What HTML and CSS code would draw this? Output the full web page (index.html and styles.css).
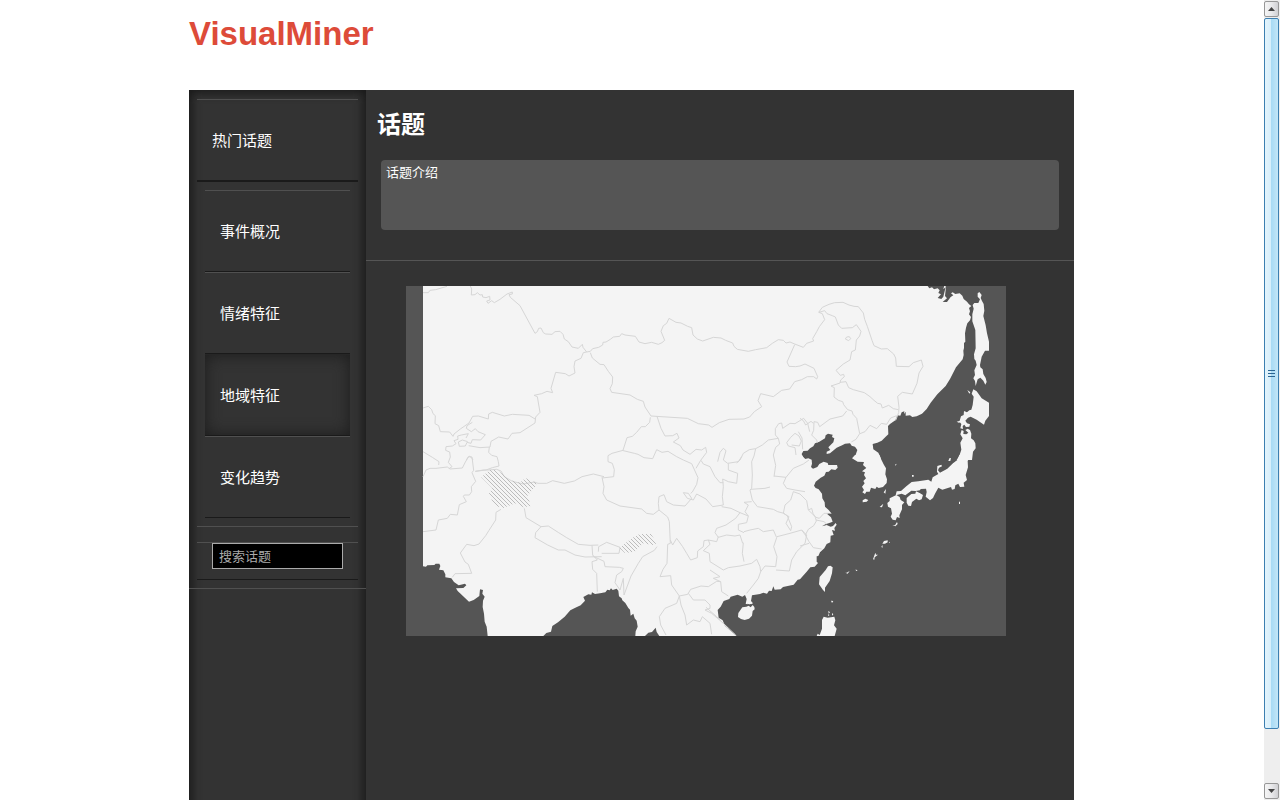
FILE: index.html
```html
<!DOCTYPE html>
<html lang="zh-CN">
<head>
<meta charset="utf-8">
<title>VisualMiner</title>
<link rel="stylesheet" href="styles.css">
</head>
<body>
<div class="page">
  <div class="wrapper">
    <header class="header"><h1>VisualMiner</h1></header>
    <div class="panel">
      <nav class="sidebar">
        <div class="group">
          <a class="item item-root" href="#">热门话题</a>
          <ul class="submenu">
            <li><a class="item" href="#">事件概况</a></li>
            <li><a class="item" href="#">情绪特征</a></li>
            <li><a class="item active" href="#" aria-current="page">地域特征</a></li>
            <li><a class="item" href="#">变化趋势</a></li>
          </ul>
          <form class="search"><input type="text" placeholder="搜索话题" aria-label="搜索话题"></form>
        </div>
      </nav>
      <main class="main">
        <section class="topic">
          <h2>话题</h2>
          <p class="intro">话题介绍</p>
        </section>
        <section class="map">
          <svg viewBox="18 18 1800 1050" role="img" aria-label="中国地图">
            <defs>
              <pattern id="hatch" width="12" height="12" patternUnits="userSpaceOnUse"><path d="M-1-1L13 13M-1 11L1 13M11-1L13 1" stroke="#bcbcbc" stroke-width="3"/></pattern>
            </defs>
            <!-- land -->
            <g fill="#f4f4f4">
              <path d="M69 18H600V540H69z"/>
              <path d="M600 18H1200V540H600z"/>
              <g transform="translate(1200 0)">
                <path d="M0 18H383L388 25 396 22 402 28 413 25 419 31 415 39 423 43 413 54 424 57 430 50 437 21 430 28 433 16 438 20 435 48 441 55 428 66 441 66 452 51 460 46 453 40 458 37 466 42 479 40 487 47 491 57 501 65 507 73 514 78 507 84 510 94 507 103 513 111 510 121 502 130 498 143 495 160 496 185 492 189 492 204 490 212 491 225 488 238 468 262 450 297 437 318 412 343 392 368 380 387 366 401 350 409 337 411 330 406 317 407 317 395 312 402 313 394 305 397 301 407 292 406 286 421 270 432 264 438 265 463 257 470 245 482 232 488 218 492 220 508 235 518 241 531 243 540H165L167 524 172 510 165 500 155 497 150 490 135 491 128 495 110 503 90 520 80 522 80 515 91 510 85 502 100 487 103 475 96 471 98 464 84 461 77 466 75 475 58 485 45 490 40 499 30 505 23 512 10 513 5 522 10 533 20 540H0z"/>
                <path d="M538 36L545 45 542 54 546 63 551 72 553 92 550 108 557 136 561 160 567 185V212H555L545 230 540 255 541 262 548 268 550 282 557 294 560 306 556 314 550 302 541 293 533 298 527 318 525 303 520 295 525 285 523 271 530 255 527 242 523 237 522 223 527 205 526 150 517 124 517 103 521 86 518 75 523 69 535 69 540 58 533 50 533 40z"/>
                <path d="M520 328L530 334 545 355 567 368V408L556 422 552 434 530 419 512 410 504 413 496 422 501 430 510 433 508 440 498 441 493 434 488 438 489 447 481 445 484 432 478 425 483 409 491 405 492 393 501 397 508 391 514 389 518 375 521 350 515 341zM502 330L511 337 508 341zM470 425L480 422 478 429z"/>
                <path d="M485 450L491 453 490 462 499 463 505 458 496 450 503 446 510 450 514 461 513 475 521 481 526 490 527 505 519 515 516 540H470L478 527 484 509 481 488 488 475 481 463z"/>
              </g>
              <path transform="translate(0 525)" d="M69 0V334L78 335 82 331 103 330 107 326 118 326 121 333 117 344 130 346 136 358 136 367 154 370 162 381 176 391 195 386 199 391 190 399 168 400 173 408 207 440 221 435 238 423 240 403 249 405 247 416 254 425 249 437 248 456 252 476 254 500 260 515 263 543H430L439 534 453 530 457 513 474 502 494 485 511 466 526 458 542 451 555 437 550 426 565 418 574 419 576 412 585 417 600 415V0z"/>
              <path transform="translate(600 525)" d="M0 0V415L16 412 22 404 29 406 33 400 38 405 50 401 55 407 57 424 65 430 67 436 76 444 85 459 90 464 92 482 100 476 104 490 110 497 113 515 107 529 106 543H135L145 533 156 531 167 518 170 531 178 543H410L389 525 375 512 368 496 356 488 353 465 362 455 371 438 388 432 392 425 413 419 427 425 435 420 440 432 437 446 449 450 459 445 453 438 456 421 480 417 490 413 501 416 507 407 515 408 520 394 524 404 542 403 549 396 581 389 593 374 600 373V0z"/>
              <path transform="translate(600 525)" d="M415 474L427 457 439 455 446 452 452 457 458 450 463 456 464 463 458 468 456 482 447 491 434 495 423 492 414 486z"/>
              <g transform="translate(1200 525)">
                <path d="M0 0H5L15 12 25 10 35 14 36 26 33 36 39 41 52 36 58 27 71 20 83 24 85 30 111 30 113 38 106 45 94 43 86 50 78 51 73 62 62 68 47 80 42 92 47 99 56 103 66 116 67 130 74 142 75 155 86 165 95 176 79 175 93 187 98 200 88 204 76 208 66 214 80 210 92 215 99 213 107 204 110 209 103 219 105 227 96 225 101 240 92 242 91 262 80 267 73 280 60 292 55 303 50 304 50 320 54 324 44 335 31 337 20 350 0 373z"/>
                <path d="M165 0H238L243 12 252 30 258 40 256 58 261 73 260 84 249 96 236 99 230 95 226 102 213 98 209 110 199 110 195 117 187 112 192 105 186 95 194 85 190 78 198 70 192 60 195 52 186 49 199 39 189 30 192 21 173 20 156 10z"/>
                <path d="M478 0L473 14 459 25 442 41 420 53 414 46 417 38 426 34 424 29 412 33 411 50 415 57 398 67 394 80 385 74 355 79 335 81 319 94 303 108 290 109 287 121 305 116 316 121 334 107 347 108 360 106 362 102 378 101 380 111 377 125 390 136 399 129 405 116 410 107 415 98 427 104 453 96 456 104 464 102 466 91 475 86 480 96 493 95 491 83 501 75 497 60 504 37 503 18 510 5 516 9 515 0z"/>
                <path d="M320 129L334 117 346 116 348 109 359 114 369 120 365 133 357 136 349 131 336 141 333 153 325 152 320 143zM289 120L299 126 302 135 313 142 306 150 306 163 298 181 299 189 291 186 287 196 278 194 272 185 276 176 273 160 264 155 262 144 269 138 269 130zM188 136L196 131 205 135 200 140 188 142zM251 112L258 102 256 116zM239 156L250 146 246 157zM277 211L285 211 291 201 293 207 286 214zM247 266L252 258 263 256 263 262 255 266zM244 276L247 270 248 278zM219 313L226 293 228 299 234 299 224 307 223 314zM136 353L143 356 149 348 140 353zM167 343L173 347 168 348zM445 18L448 10 453 9 451 18zM336 60H341V65H336zM285 29L290 26 287 32zM477 140H480V147H477zM267 260L270 262 267 264z"/>
                <path d="M77 345L84 334 91 332 98 337 96 355 89 378 75 398 75 411 69 405 57 388 59 366zM93 437L100 438 96 444zM85 467L90 472 86 476zM84 478L89 480 84 483zM96 474L100 478 96 482zM66 495L71 485 83 488 103 485 106 496 102 511 110 521 104 543H50L53 536 59 540 66 521z"/>
              </g>
            </g>
            <!-- inlets -->
            <path transform="translate(600 525)" d="M442 448L450 450 452 447" fill="none" stroke="#555" stroke-width="3"/>
            <!-- borders -->
            <g class="borders">
              <path d="M69 38H85L90 31 107 29 141 19M211 18L215 27 214 45 225 44 232 38 240 45 247 44 248 51 258 53 269 49 270 60 260 63 264 70 275 62 283 68 300 58 321 42 337 36 337 42 327 44 331 52 360 77 405 160 412 155 416 145 423 144 430 158 437 162 456 163 465 155 480 154 489 163 493 177 505 185 516 201 535 205 547 193 549 202 560 216 571 214 578 206 596 202 608 195 609 187 618 186 631 178 640 171 659 169 665 161 675 165 706 169 717 186 735 191 755 187 775 193 786 188 794 181 783 154 790 137 800 130 807 115 828 127 843 129 863 139 875 143 879 165 892 177 908 183 940 172 963 174 977 181 998 189 1002 199 1012 208 1045 214 1067 209 1100 203 1117 190 1135 179 1150 181 1158 189 1170 186 1184 192 1210 202 1220 190 1241 183 1238 176 1250 155 1258 140 1274 119 1267 101 1256 97 1267 82 1287 73 1304 68 1329 67 1347 75 1362 79 1375 80 1390 99 1394 118 1402 139 1416 181 1422 197 1444 207 1462 206 1481 222 1487 234 1489 259 1527 260 1540 248 1564 240 1569 259 1557 279 1551 310 1537 342 1507 337 1493 349 1497 382 1496 398 1487 421"/>
              <path d="M560 216L550 218 543 235 525 243 522 260 525 279 507 288 496 281 467 277 453 325 458 338 441 334 425 341 402 346 412 350 420 397 407 411 405 429 360 458 336 460 324 477 296 471 273 484 270 501 240 503 206 497M407 418L387 406 337 403 313 408 277 397 266 402 265 417 235 408 218 409 207 429 181 447 162 462 159 469 149 456 121 455 116 437 105 431 106 407 99 401 95 389 85 379 69 384M217 427L201 437 199 445 214 455 226 446 234 455 256 464 242 480 217 479 213 490 201 487 196 498 178 499 175 486 187 480 203 485M198 474L205 461 184 465 173 468 174 478 162 482 168 491 157 498 138 500 137 511 149 516 151 531 145 547 156 560 147 566M69 515L97 532 117 545 116 555M199 540Q208 518 219 540M268 501L266 517 275 526 291 530 295 545 297 558 277 563 258 570 226 574"/>
              <path d="M571 218L577 234 600 253 612 254 625 274 638 291 637 311 630 326 635 337 690 345 712 358 730 364 735 381 753 408 862 415 895 431 926 435 936 442 958 428 987 418 1032 417 1049 411 1063 395 1085 380 1074 362 1082 341 1120 350 1145 331 1169 327 1184 305 1205 299 1222 290 1241 290 1250 297 1253 290 1242 265 1215 252 1200 258 1187 260 1167 259 1161 246 1184 194M771 409L783 445 795 468 818 467 831 460 837 474 820 486 841 497 849 510 870 523 888 508 905 510 917 502 920 517 902 541 888 565M751 412L749 427 736 440 724 440 710 457 697 469 681 473 669 511 636 520 624 527 624 545 637 550 643 569 641 590 606 594M666 511L703 520 714 523 732 533 758 536 770 509 786 517 804 514 830 530 850 540 875 551 894 593 890 613 877 636 872 640"/>
              <path d="M1257 97L1274 92 1281 101 1297 107 1306 111 1315 135 1325 145 1357 143 1369 134 1383 154 1379 168 1369 180 1366 210 1355 215 1350 240 1330 252 1308 271 1321 286 1331 283 1333 290 1322 300 1320 309 1293 318 1303 323 1302 351 1315 361 1328 365 1331 374 1343 389 1356 393 1359 403 1370 415 1379 461 1368 478 1354 486M1320 307L1338 305 1346 323 1360 329 1393 338 1410 350 1422 361 1433 370 1443 372 1447 384 1466 376 1480 386 1495 389M1340 393L1328 408 1290 417 1259 440 1253 427 1242 425 1241 451 1235 465 1250 480 1252 488M1380 461L1395 455 1410 436 1430 446 1444 430 1460 433 1472 414 1490 407M1340 171L1348 170 1352 176 1346 182 1336 177zM1200 415L1210 422 1217 435 1233 424 1240 430M1195 455L1206 474 1208 508"/>
              <path d="M1229 455L1223 430 1211 415 1185 431 1170 430 1148 445 1145 429 1136 431 1126 446 1126 465 1135 475 1105 480 1087 495 1067 506 1062 528 1055 545 1057 585 1055 625M1067 506L1048 509 1030 520 1020 540 1010 549M953 545L960 517 970 505 978 512 970 540 983 550 1015 545 1025 530M903 541L910 552 930 560 945 590 960 608 970 608M1135 475L1139 492 1127 502 1120 525 1127 556 1122 590M1188 525L1185 503 1165 498 1160 488 1172 472 1185 460 1197 468 1204 483 1198 498 1175 495M1055 625L1050 630 1057 660 1072 680 1120 688 1133 695 1152 700 1162 708 1175 740 1172 752M1122 588L1158 592 1150 610 1160 625 1185 630 1215 635M1110 621L1095 625 1052 628M1158 592L1180 565 1210 552 1227 540"/>
              <path d="M69 755L108 750 115 720 142 715 151 703 172 705 178 674 199 665 190 649 193 645 208 645 215 635 214 620 227 604 216 578 221 571 216 531 206 530 196 546 187 564 150 567 142 561 108 565 90 565 78 570 69 590M226 574L250 570 266 570 290 568 303 573 313 590 337 604 370 612 403 606 414 610 440 610 458 602 493 610 523 603 546 590 580 582 612 590M303 688L288 697 287 720 267 751 257 767 237 792 222 797 200 793 181 819 195 846 205 853 215 880 165 881 157 892M373 685L378 713 423 740 407 758 405 773 443 795 475 810 495 810 525 825 555 831 605 830M423 740L445 738 476 758 500 773 535 793 570 796 595 795M576 796L578 825 592 840 576 845 578 868 590 880 592 935M578 828L612 844 615 860 658 862 670 865 665 875 650 885 645 908 660 930 670 895 672 945 693 888 715 850 728 830 763 811 771 800M595 815L596 800 620 787 660 802 657 820 605 820"/>
              <path d="M606 592L612 620 609 640 620 660 660 678 725 687 740 700 760 703 777 690 803 711 808 725 811 790 803 793 801 850 789 868 780 890 812 887 815 915 838 948 863 943 872 928 903 918 925 920 950 904 962 905M777 690L775 670 777 650 792 644 800 665 820 675 855 678 875 655 865 640 850 638 862 655 880 660 890 642 918 657 938 680 970 675 967 650 970 620 968 597 985 605 1010 610 1013 580 985 570 985 550M965 680L993 685 1020 698 1007 715 978 735 950 745 945 758 955 772 980 765 1005 768 1020 765 1028 790M1020 698L1045 708 1040 728 1015 733 1015 750 1032 758M1055 665L1032 667 1045 675 1035 695 1045 708M811 780L818 795 830 775 848 800 860 820 872 840 892 833 893 813 910 800 912 782 925 780 950 785 955 770M925 780L930 793 910 812 928 820 930 845 970 870 985 863 1020 858 1055 850 1070 838 1080 860 1082 875 1075 895 1060 915 1040 940M1030 788L1027 820 1032 845M930 870L960 890 940 895 962 905 965 935 985 948M1032 755L1050 750 1075 745 1090 755 1120 750 1130 773 1121 800 1131 830 1127 860 1095 858 1082 875M1131 770L1170 760 1205 750 1220 765 1215 790 1190 815 1175 840 1168 873 1128 870"/>
              <path d="M838 948L830 970 795 985 778 1010 782 1035 798 1065M838 948L843 975 855 1005 860 1035 880 1020 900 1025 907 1010 930 1030 935 1063M865 940L880 960 915 960 930 975 930 985 915 990M915 990L935 1000 970 1030 1007 1065M918 982L950 1010 985 1045M1172 752L1158 730 1167 710 1150 700 1155 675 1172 660 1180 635M1180 635L1200 642 1220 662 1225 690 1235 685 1239 700 1246 712 1249 723 1241 737 1225 748 1216 765M1225 690L1248 712 1258 715 1272 700 1285 700M1248 720L1272 725 1280 732M1216 765L1227 785 1240 803 1265 807M1205 750L1216 765M1227 790L1200 798"/>
            </g>
            <g fill="url(#hatch)">
              <path d="M244 592L270 569 292 570 330 600 360 608 376 594 409 609 408 617 382 647 393 678 370 682 345 670 310 684 283 677 267 640 277 625z"/>
              <path d="M658 804L695 775 719 762 753 762 770 790 758 795 730 790 704 815 675 819z"/>
            </g>
          </svg>
        </section>
      </main>
    </div>
  </div>
</div>
<div class="scrollbar" aria-hidden="true">
  <span class="arrow"><svg viewBox="0 0 7 4"><path d="M0 4L3.500 0 7 4z"/></svg></span>
  <span class="thumb"><i></i><i></i><i></i></span>
  <span class="track"></span>
  <span class="arrow"><svg viewBox="0 0 7 4"><path d="M0 0L3.500 4 7 0z"/></svg></span>
</div>
</body>
</html>
```
FILE: styles.css
```css
* { box-sizing: border-box; }
body {
  margin: 0;
  height: 100vh;
  display: flex;
  background: #fff;
  color: #fff;
  font: 15px/16px "Liberation Sans", "Noto Sans CJK SC", sans-serif;
}
.page { flex: 1; min-width: 0; overflow: hidden; }
.wrapper {
  max-width: 885px;
  min-height: 100%;
  margin: 0 auto;
  display: flex;
  flex-direction: column;
}
.header { height: 90px; padding-top: 16px; }
h1 { margin: 0; font-size: 33px; line-height: 36px; color: #dd4b39; }
.panel { flex: 1; display: flex; overflow: hidden; background: #333; }
.sidebar {
  width: 177px;
  flex: none;
  margin-bottom: -20px;
  box-shadow: inset 0 0 10px 3px #1a1a1a;
}
.group {
  padding: 9px 8px 8px;
  border-bottom: 1px solid #505050;
}
.item {
  display: block;
  padding: 33px 15px 31px;
  border-top: 1px solid #505050;
  border-bottom: 1px solid #1a1a1a;
  color: #fff;
  text-decoration: none;
}
.item-root { border-bottom-width: 2px; }
.active {
  border-top-color: #262626;
  box-shadow: inset 0 0 15px #1c1c1c;
}
.submenu { list-style: none; margin: 0; padding: 8px; }
.search {
  margin: 0;
  border-top: 1px solid #505050;
  border-bottom: 1px solid #1a1a1a;
  padding: 16px 15px 10px;
  background: linear-gradient(#505050, #505050) 0 15px / 100% 1px no-repeat;
}
.search input {
  display: block;
  width: 100%;
  height: 26px;
  padding: 0 6px;
  border: 1px solid #aaa;
  background: #000;
  color: #fff;
  font: inherit;
  font-size: 13px;
}
.search input::placeholder { color: #aaa; opacity: 1; }
.main { flex: 1; min-width: 0; }
.topic { padding: 20px 15px 30px; border-bottom: 1px solid #555; }
h2 { margin: 0 0 20px -4px; font-size: 24px; line-height: 30px; }
.intro {
  margin: 0;
  min-height: 70px;
  padding: 5px;
  border-radius: 4px;
  background: #555;
  font-size: 13px;
}
.map { padding: 25px 40px; }
.map svg {
  display: block;
  width: 100%;
  max-width: 600px;
  background: #555;
}
.borders { fill: none; stroke: #d6d6d6; stroke-width: 3; stroke-linejoin: round; }
.scrollbar {
  width: 17px;
  flex: none;
  display: flex;
  flex-direction: column;
  padding: 1px 1px 1px 0;
  border-left: 1px solid #fff;
  background: #eee;
}
.arrow {
  height: 16px;
  display: flex;
  align-items: center;
  justify-content: center;
  border: 1px solid #979797;
  border-radius: 2px;
  background: linear-gradient(90deg, #f5f5f5, #e9e9eb 50%, #d0d0d3);
}
.arrow svg { width: 7px; height: 4px; fill: #444; }
.thumb {
  flex: 711;
  margin-top: 1px;
  display: flex;
  flex-direction: column;
  align-items: center;
  justify-content: center;
  gap: 2px;
  border: 1px solid #3c7fb1;
  border-radius: 2px;
  background: linear-gradient(90deg, #e3f4fc, #d6eefb 45%, #a9dbf5 50%, #c3e6f7);
}
.thumb i { width: 7px; height: 1px; background: #2a6592; }
.track { flex: 54; }
```
